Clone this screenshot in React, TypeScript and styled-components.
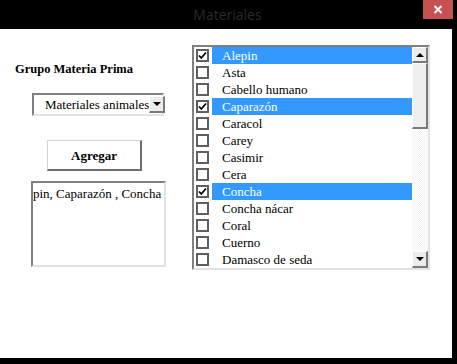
import React from 'react';
import styled, { createGlobalStyle } from 'styled-components';

const GlobalStyle = createGlobalStyle`
  html, body {
    margin: 0;
    padding: 0;
    background: #000;
  }
  body {
    width: 457px;
    height: 364px;
    overflow: hidden;
  }
`;

const Window = styled.div`
  display: flex;
  flex-direction: column;
  width: 457px;
  height: 364px;
  background: #000;
`;

const TitleBar = styled.div`
  position: relative;
  height: 29px;
  display: flex;
  align-items: center;
  justify-content: center;
`;

const Title = styled.span`
  font-family: 'Open Sans', 'Noto Sans', sans-serif;
  font-size: 14px;
  color: #2a2a2a;
  margin-top: -1px;
  margin-right: 2px;
`;

// close button sits over the title bar
const CloseButton = styled.div`
  position: absolute;
  top: 0;
  right: 4px;
  width: 30px;
  height: 19px;
  background: #c75050;
  display: flex;
  align-items: center;
  justify-content: center;
`;

const Body = styled.div`
  width: 452px;
  height: 329px;
  background: #fff;
  display: flex;
  padding-top: 16px;
  box-sizing: border-box;
`;

const LeftColumn = styled.div`
  width: 192px;
  display: flex;
  flex-direction: column;
  align-items: flex-start;
`;

const GroupLabel = styled.div`
  margin: 16px 0 0 15px;
  height: 16px;
  line-height: 16px;
  font-family: 'Liberation Serif', serif;
  font-weight: bold;
  font-size: 12.5px;
  color: #000;
`;

const Combo = styled.div`
  margin: 16px 0 0 32px;
  width: 132px;
  height: 23px;
  box-sizing: border-box;
  border-top: 2px solid #808080;
  border-left: 2px solid #808080;
  border-right: 2px solid #e3e3e3;
  border-bottom: 2px solid #e3e3e3;
  display: flex;
  align-items: center;
  justify-content: space-between;
  background: #fff;
`;

const ComboText = styled.span`
  font-family: 'Liberation Serif', serif;
  font-size: 13px;
  color: #000;
  margin-left: 11px;
  white-space: nowrap;
`;

const ArrowButton = styled.div<{ $size?: number }>`
  width: 16px;
  height: ${p => p.$size ?? 17}px;
  box-sizing: border-box;
  background: #ececec;
  border-top: 1px solid #fff;
  border-left: 1px solid #fff;
  border-right: 2px solid #7a7a7a;
  border-bottom: 2px solid #7a7a7a;
  display: flex;
  align-items: center;
  justify-content: center;
  flex-shrink: 0;
`;

const Triangle = styled.div<{ $up?: boolean }>`
  width: 0;
  height: 0;
  border-left: 4px solid transparent;
  border-right: 4px solid transparent;
  ${p => (p.$up ? 'border-bottom: 4px solid #000;' : 'border-top: 4px solid #000;')}
`;

const AddButton = styled.div`
  margin: 24px 0 0 47px;
  width: 95px;
  height: 31px;
  box-sizing: border-box;
  padding-top: 1px;
  background: #fff;
  border-top: 1px solid #d4d4d4;
  border-left: 1px solid #d4d4d4;
  border-right: 2px solid #6e6e6e;
  border-bottom: 2px solid #6e6e6e;
  display: flex;
  align-items: center;
  justify-content: center;
  font-family: 'Liberation Serif', serif;
  font-weight: bold;
  font-size: 13px;
  color: #000;
`;

const TextBox = styled.div`
  margin: 10px 0 0 31px;
  width: 135px;
  height: 86px;
  box-sizing: border-box;
  border-top: 2px solid #808080;
  border-left: 2px solid #808080;
  border-right: 2px solid #e0e0e0;
  border-bottom: 2px solid #e0e0e0;
  overflow: hidden;
  font-family: 'Liberation Serif', serif;
  font-size: 13px;
  line-height: 16px;
  color: #000;
  padding: 3px 0 0 0;
  white-space: nowrap;
`;

const ListBox = styled.div`
  width: 238px;
  height: 225px;
  box-sizing: border-box;
  border-top: 2px solid #808080;
  border-left: 2px solid #808080;
  border-right: 2px solid #e3e3e3;
  border-bottom: 2px solid #e3e3e3;
  display: flex;
  background: #fff;
`;

const Rows = styled.div`
  flex: 1;
  display: flex;
  flex-direction: column;
`;

const Row = styled.div`
  height: 17px;
  display: flex;
  align-items: center;
`;

const CheckBox = styled.div`
  width: 13px;
  height: 13px;
  box-sizing: border-box;
  margin-left: 2px;
  border: 2px solid #5f5f5f;
  background: #fff;
  display: flex;
  align-items: center;
  justify-content: center;
`;

const ItemLabel = styled.div<{ $selected: boolean }>`
  margin-left: 3px;
  flex: 1;
  height: 17px;
  line-height: 17px;
  padding-left: 10px;
  background: ${p => (p.$selected ? '#3399ff' : 'transparent')};
  color: ${p => (p.$selected ? '#fff' : '#000')};
  font-family: 'Liberation Serif', serif;
  font-size: 13px;
  white-space: nowrap;
`;

const ScrollBar = styled.div`
  width: 16px;
  display: flex;
  flex-direction: column;
  background-color: #f4f4f4;
  background-image:
    linear-gradient(45deg, #fff 25%, transparent 25%, transparent 75%, #fff 75%),
    linear-gradient(45deg, #fff 25%, transparent 25%, transparent 75%, #fff 75%);
  background-size: 2px 2px;
  background-position: 0 0, 1px 1px;
`;

const Thumb = styled.div`
  height: 66px;
  box-sizing: border-box;
  background: #efefef;
  border-top: 1px solid #fff;
  border-left: 1px solid #fff;
  border-right: 2px solid #7a7a7a;
  border-bottom: 2px solid #7a7a7a;
`;

const Track = styled.div`
  flex: 1;
`;

const items = [
  { label: 'Alepin', checked: true },
  { label: 'Asta', checked: false },
  { label: 'Cabello humano', checked: false },
  { label: 'Caparazón', checked: true },
  { label: 'Caracol', checked: false },
  { label: 'Carey', checked: false },
  { label: 'Casimir', checked: false },
  { label: 'Cera', checked: false },
  { label: 'Concha', checked: true },
  { label: 'Concha nácar', checked: false },
  { label: 'Coral', checked: false },
  { label: 'Cuerno', checked: false },
  { label: 'Damasco de seda', checked: false },
];

const CheckMark = () => (
  <svg width="9" height="9" viewBox="0 0 9 9">
    <path d="M1 4.5 L3.3 7 L8 1.5" fill="none" stroke="#000" strokeWidth="1.8" />
  </svg>
);

const CloseIcon = () => (
  <svg width="10" height="9" viewBox="0 0 10 9">
    <path d="M1.5 1 L8.5 8 M8.5 1 L1.5 8" stroke="#fff" strokeWidth="2" />
  </svg>
);

export default function App() {
  return (
    <Window>
      <GlobalStyle />
      <TitleBar>
        <Title>Materiales</Title>
        <CloseButton>
          <CloseIcon />
        </CloseButton>
      </TitleBar>
      <Body>
        <LeftColumn>
          <GroupLabel>Grupo Materia Prima</GroupLabel>
          <Combo>
            <ComboText>Materiales animales</ComboText>
            <ArrowButton>
              <Triangle />
            </ArrowButton>
          </Combo>
          <AddButton>Agregar</AddButton>
          <TextBox>pin, Caparazón , Concha</TextBox>
        </LeftColumn>
        <ListBox>
          <Rows>
            {items.map((item, i) => (
              <Row key={i}>
                <CheckBox>{item.checked && <CheckMark />}</CheckBox>
                <ItemLabel $selected={item.checked}>{item.label}</ItemLabel>
              </Row>
            ))}
          </Rows>
          <ScrollBar>
            <ArrowButton $size={16}>
              <Triangle $up />
            </ArrowButton>
            <Thumb />
            <Track />
            <ArrowButton $size={17}>
              <Triangle />
            </ArrowButton>
          </ScrollBar>
        </ListBox>
      </Body>
    </Window>
  );
}
